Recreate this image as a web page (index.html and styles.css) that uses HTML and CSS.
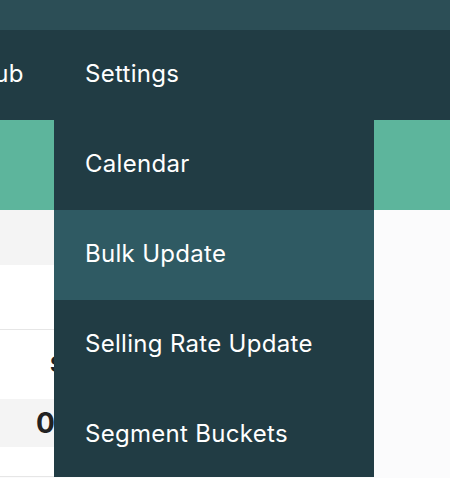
FILE: index.html
```html
<!DOCTYPE html>
<html lang="en">
<head>
  <meta charset="UTF-8" />
  <meta name="viewport" content="width=device-width, initial-scale=1.0"/>
  <title>Settings</title>
  <link rel="stylesheet" href="styles.css">
</head>
<body>

  <!-- Top strip -->
  <div class="topbar"></div>

  <!-- Main nav -->
  <div class="nav">
    <a class="nav-link hub" href="#">Hub</a>
    <div class="nav-item">
      <a class="nav-link" href="#">Settings</a>
      <!-- Settings dropdown -->
      <div class="menu">
        <a class="menu-item" href="#">Calendar</a>
        <a class="menu-item active" href="#">Bulk Update</a>
        <a class="menu-item" href="#">Selling Rate Update</a>
        <a class="menu-item" href="#">Segment Buckets</a>
      </div>
    </div>
  </div>

  <!-- Teal band -->
  <div class="band"></div>

  <!-- Table -->
  <div class="table">
    <div class="row shade h55"></div>
    <div class="row h65 line"></div>
    <div class="row h69 head"><span>Sold</span></div>
    <div class="row h48 shade value"><span>0</span></div>
    <div class="row h30 line"></div>
  </div>

</body>
</html>
```

FILE: styles.css
```css
* {
  margin: 0;
  padding: 0;
  box-sizing: border-box;
}

body {
  font-family: Inter, "Noto Sans", sans-serif;
  background-color: #fbfbfc;
  overflow: hidden;
}

.topbar {
  height: 30px;
  background-color: #2c4e56;
}

.nav {
  height: 90px;
  background-color: #213c44;
  display: flex;
  align-items: stretch;
}

.nav-link {
  color: #fff;
  text-decoration: none;
  font-size: 24px;
  letter-spacing: 0.3px;
  display: flex;
  align-items: center;
  padding-bottom: 3px;
}

.nav-link.hub {
  margin-left: -24px;
  width: 78px;
}

.nav-item {
  position: relative;
  width: 320px;
  padding-left: 31px;
  display: flex;
}

.menu {
  position: absolute;
  top: 100%;
  left: 0;
  width: 320px;
  background-color: #213c44;
  z-index: 5;
}

.menu-item {
  height: 90px;
  display: flex;
  align-items: center;
  padding-left: 31px;
  padding-bottom: 3px;
  color: #fff;
  text-decoration: none;
  font-size: 24px;
  letter-spacing: 0.3px;
}

.menu-item.active {
  background-color: #2f5a63;
}

.band {
  height: 90px;
  background-color: #5db59c;
}

.table {
  width: 374px;
  background-color: #fff;
}

.row { border-bottom: 1px solid transparent; }
.row.line { border-bottom-color: #e6e6e6; }
.row.shade { background-color: #f4f4f4; }

.h55 { height: 55px; }
.h65 { height: 65px; }
.h69 { height: 69px; }
.h48 { height: 48px; }
.h30 { height: 30px; }

.head {
  display: flex;
  align-items: center;
  padding-left: 50px;
  font-size: 22px;
  font-weight: 700;
  color: #222;
}

.value {
  display: flex;
  align-items: center;
  padding-left: 36px;
  font-size: 28px;
  font-weight: 700;
  color: #222;
}
```
